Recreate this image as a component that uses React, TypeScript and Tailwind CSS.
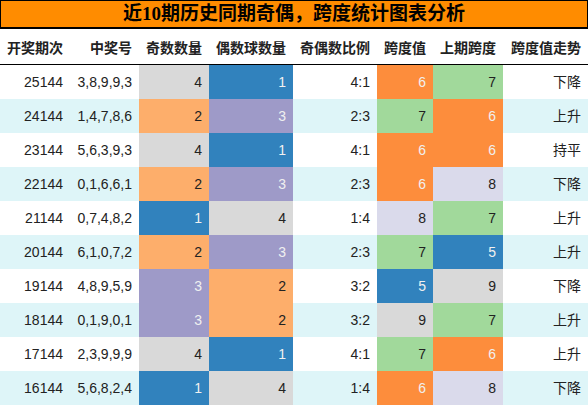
type Row = {
  issue: string
  nums: string
  odd: number
  even: number
  ratio: string
  span: number
  prev: number
  trend: string
}

const ROWS: Row[] = [
  { issue: "25144", nums: "3,8,9,9,3", odd: 4, even: 1, ratio: "4:1", span: 6, prev: 7, trend: "下降" },
  { issue: "24144", nums: "1,4,7,8,6", odd: 2, even: 3, ratio: "2:3", span: 7, prev: 6, trend: "上升" },
  { issue: "23144", nums: "5,6,3,9,3", odd: 4, even: 1, ratio: "4:1", span: 6, prev: 6, trend: "持平" },
  { issue: "22144", nums: "0,1,6,6,1", odd: 2, even: 3, ratio: "2:3", span: 6, prev: 8, trend: "下降" },
  { issue: "21144", nums: "0,7,4,8,2", odd: 1, even: 4, ratio: "1:4", span: 8, prev: 7, trend: "上升" },
  { issue: "20144", nums: "6,1,0,7,2", odd: 2, even: 3, ratio: "2:3", span: 7, prev: 5, trend: "上升" },
  { issue: "19144", nums: "4,8,9,5,9", odd: 3, even: 2, ratio: "3:2", span: 5, prev: 9, trend: "下降" },
  { issue: "18144", nums: "0,1,9,0,1", odd: 3, even: 2, ratio: "3:2", span: 9, prev: 7, trend: "上升" },
  { issue: "17144", nums: "2,3,9,9,9", odd: 4, even: 1, ratio: "4:1", span: 7, prev: 6, trend: "上升" },
  { issue: "16144", nums: "5,6,8,2,4", odd: 1, even: 4, ratio: "1:4", span: 6, prev: 8, trend: "下降" },
]

const HEADERS = ["开奖期次", "中奖号", "奇数数量", "偶数球数量", "奇偶数比例", "跨度值", "上期跨度", "跨度值走势"]

// value -> cell colour (category20c style palette)
const CELL: Record<number, string> = {
  1: "bg-[#3182bd] text-[#f0f0f0]",
  2: "bg-[#fdae6b] text-[#222]",
  3: "bg-[#9e9ac8] text-[#f0f0f0]",
  4: "bg-[#d9d9d9] text-[#222]",
  5: "bg-[#3182bd] text-[#f0f0f0]",
  6: "bg-[#fd8d3c] text-[#f0f0f0]",
  7: "bg-[#a1d99b] text-[#222]",
  8: "bg-[#dadaeb] text-[#222]",
  9: "bg-[#d9d9d9] text-[#222]",
}

const cols = "grid grid-cols-[70px_69px_70px_84px_84px_56px_70px_85px]"

function Cell({ children, className = "" }: { children: React.ReactNode; className?: string }) {
  return <div className={`flex h-[34px] items-center justify-end pr-[7px] ${className}`}>{children}</div>
}

export default function App() {
  return (
    <div
      className="w-[588px] bg-white text-[14px] text-[#222]"
      style={{ fontFamily: '"Liberation Sans", "Noto Sans CJK SC", sans-serif' }}
    >
      {/* Title */}
      <div
        className="flex h-[29px] items-center justify-center border-x border-t border-b-2 border-black bg-[#ff8c00] text-[19px] font-bold text-black"
        style={{ fontFamily: '"Liberation Serif", "Noto Sans CJK SC", serif' }}
      >
        近10期历史同期奇偶，跨度统计图表分析
      </div>

      {/* Header */}
      <div className={`${cols} h-[36px] border-b border-black`}>
        {HEADERS.map((h) => (
          <div key={h} className="flex items-center justify-end pr-[7px] pt-[3px] font-bold">
            {h}
          </div>
        ))}
      </div>

      {/* Rows */}
      {ROWS.map((r, i) => (
        <div key={r.issue} className={`${cols} ${i % 2 === 1 ? "bg-[#def5f8]" : "bg-white"}`}>
          <Cell>{r.issue}</Cell>
          <Cell>{r.nums}</Cell>
          <Cell className={CELL[r.odd]}>{r.odd}</Cell>
          <Cell className={CELL[r.even]}>{r.even}</Cell>
          <Cell>{r.ratio}</Cell>
          <Cell className={CELL[r.span]}>{r.span}</Cell>
          <Cell className={CELL[r.prev]}>{r.prev}</Cell>
          <Cell>{r.trend}</Cell>
        </div>
      ))}
    </div>
  )
}
